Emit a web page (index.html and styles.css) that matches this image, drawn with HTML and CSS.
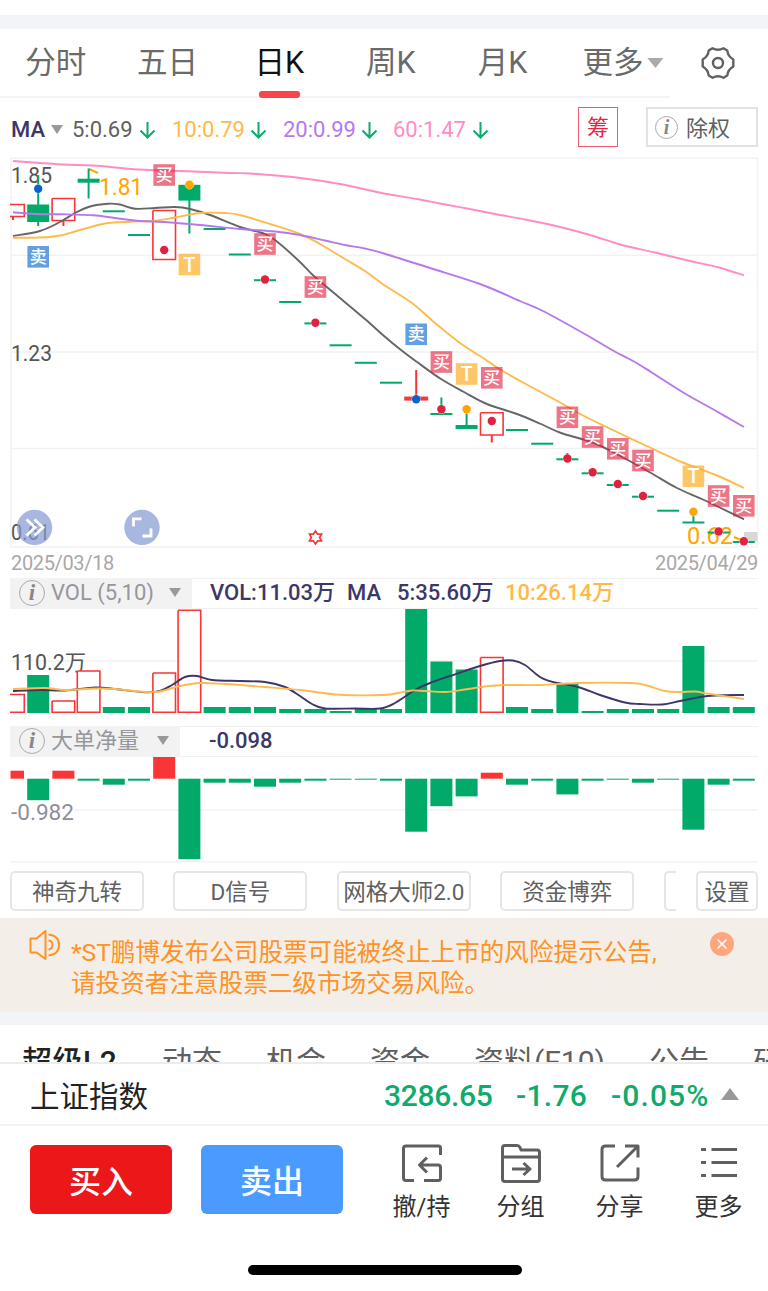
FILE: index.html
```
<!DOCTYPE html>
<html lang="zh-CN">
<head>
    <meta charset="UTF-8">
    <meta name="viewport" content="width=device-width, initial-scale=1.0">
    <title>日K</title>
    <link rel="stylesheet" href="styles.css">
</head>
<body>
    <div class="page">
        <div class="divider top-divider"></div>

        <nav class="period-tabs">
            <span class="tab">分时</span>
            <span class="tab">五日</span>
            <span class="tab active">日K</span>
            <span class="tab">周K</span>
            <span class="tab">月K</span>
            <span class="tab more">更多<i class="tri big"></i></span>
            <svg class="gear" width="36" height="36" viewBox="0 0 36 36">
                <path d="M12.500 3.300Q18 6.200 23.500 3.300L27.300 5.500Q27.800 11.300 33.300 14.500V21.500Q27.800 24.700 27.300 30.500L23.500 32.700Q18 29.800 12.500 32.700L8.700 30.500Q8.200 24.700 2.700 21.500V14.500Q8.200 11.300 8.700 5.500Z"/>
                <circle cx="18" cy="18" r="5"/>
            </svg>
        </nav>

        <div class="ma-row">
            <span class="ma-name">MA</span>
            <i class="tri"></i>
            <span class="ma ma5">5:0.69</span>
            <svg class="down" viewBox="0 0 16 18"><path d="M8 1V16M1 9.500L8 16.500L15 9.500"/></svg>
            <span class="ma ma10">10:0.79</span>
            <svg class="down" viewBox="0 0 16 18"><path d="M8 1V16M1 9.500L8 16.500L15 9.500"/></svg>
            <span class="ma ma20">20:0.99</span>
            <svg class="down" viewBox="0 0 16 18"><path d="M8 1V16M1 9.500L8 16.500L15 9.500"/></svg>
            <span class="ma ma60">60:1.47</span>
            <svg class="down" viewBox="0 0 16 18"><path d="M8 1V16M1 9.500L8 16.500L15 9.500"/></svg>
            <span class="chip">筹</span>
            <span class="adjust"><i class="info small">i</i>除权</span>
        </div>

        <svg class="chart" id="kline" width="768" height="391" viewBox="0 157 768 391"></svg>

        <div class="dates">
            <span>2025/03/18</span>
            <span>2025/04/29</span>
        </div>

        <div class="sub-head">
            <div class="picker vol-picker"><i class="info">i</i><span class="label">VOL (5,10)</span><i class="tri"></i></div>
            <span class="value vol-now">VOL:11.03万</span>
            <span class="value vol-ma">MA</span>
            <span class="value vol-ma5">5:35.60万</span>
            <span class="value vol-ma10">10:26.14万</span>
        </div>
        <svg class="chart" id="volume" width="768" height="117" viewBox="0 609 768 117"></svg>

        <div class="sub-head">
            <div class="picker net-picker"><i class="info">i</i><span class="label">大单净量</span><i class="tri"></i></div>
            <span class="value net-now">-0.098</span>
        </div>
        <svg class="chart" id="net" width="768" height="106" viewBox="0 757 768 106"></svg>

        <div class="tools">
            <div class="tool-list">
                <span class="tool">神奇九转</span>
                <span class="tool">D信号</span>
                <span class="tool">网格大师2.0</span>
                <span class="tool">资金博弈</span>
                <span class="tool"></span>
            </div>
            <span class="tool setting">设置</span>
        </div>

        <div class="notice">
            <svg class="horn" width="32" height="32" viewBox="0 0 32 32">
                <path d="M2.500 9.500H8.500L17.500 2V30L8.500 23.500H2.500Z"/>
                <path d="M20.500 11.500Q24.500 12 24.500 16Q24.500 20 20.500 20.500M20.500 5.500Q31 6.500 31 16Q31 25.500 20.500 26.500"/>
            </svg>
            <p class="notice-text">*ST鹏博发布公司股票可能被终止上市的风险提示公告,<br>请投资者注意股票二级市场交易风险。</p>
            <svg class="close" width="24" height="24" viewBox="0 0 24 24">
                <circle cx="12" cy="12" r="12"/>
                <path d="M7.500 7.500L16.500 16.500M16.500 7.500L7.500 16.500"/>
            </svg>
        </div>
        <div class="divider"></div>

        <nav class="info-tabs">
            <span class="current">超级L2</span>
            <span>动态</span>
            <span>机会</span>
            <span>资金</span>
            <span>资料(F10)</span>
            <span>公告</span>
            <span>研报</span>
        </nav>

        <div class="index-bar">
            <span class="index-name">上证指数</span>
            <span class="num price">3286.65</span>
            <span class="num change">-1.76</span>
            <span class="num percent">-0.05%</span>
            <i class="tri up"></i>
        </div>

        <div class="actions">
            <button class="trade buy">买入</button>
            <button class="trade sell">卖出</button>
            <div class="action">
                <svg width="44" height="42" viewBox="0 0 44 42">
                    <path d="M40.500 12V5Q40.500 3 38.500 3H6Q3.500 3 3.500 5.500V34.500Q3.500 37.500 6 37.500H14M24 37.500H38.500Q40.500 37.500 40.500 35V24.500Q40.500 22 38 22H20M27 14.500L19.500 22L27 29.500"/>
                </svg>
                <span>撤/持</span>
            </div>
            <div class="action">
                <svg width="44" height="42" viewBox="0 0 44 42">
                    <path d="M3.500 36V5Q3.500 2.500 6 2.500H18Q20 2.500 21 4.500L22 7H38Q40.500 7 40.500 9.500V36Q40.500 38.500 38 38.500H6Q3.500 38.500 3.500 36ZM3.500 14H40.500M13 26H31M24.500 20L31 26L24.500 32"/>
                </svg>
                <span>分组</span>
            </div>
            <div class="action">
                <svg width="44" height="42" viewBox="0 0 44 42">
                    <path d="M17 3H7.500Q4 3 4 6.500V33.500Q4 37 7.500 37H36.500Q40 37 40 33.500V24.500M27 3H40V14.500M40 3L19 24"/>
                </svg>
                <span>分享</span>
            </div>
            <div class="action">
                <svg width="44" height="42" viewBox="0 0 44 42">
                    <path d="M4 6.500H9M14.500 6.500H40M4 19.500H9M14.500 19.500H40M4 32.500H9M14.500 32.500H40"/>
                </svg>
                <span>更多</span>
            </div>
        </div>
        <div class="home-bar"></div>
    </div>
    <script src="chart.js"></script>
</body>
</html>
```
FILE: styles.css
```
* {
    box-sizing: border-box;
}
body {
    margin: 0;
    background-color: #fff;
    font-family: Roboto, "Noto Sans CJK SC", sans-serif;
    color: #606060;
}
.page {
    width: 768px;
    height: 1291px;
    overflow: hidden;
}
.divider {
    height: 13px;
    background-color: #f3f4f8;
}
.top-divider {
    height: 14px;
    margin-top: 15px;
}

/* period tabs */
.period-tabs {
    display: flex;
    height: 69px;
    background: linear-gradient(#f3f3f5, #f3f3f5) left bottom / 670px 2px no-repeat;
}
.tab {
    display: flex;
    flex-direction: column;
    align-items: center;
    justify-content: space-between;
    width: 111.700px;
    padding-top: 12px;
    font-size: 30.500px;
    line-height: 44px;
    color: #6a6a6a;
}
.tab.active {
    color: #111;
}
.tab.active::after {
    content: "";
    width: 41px;
    height: 7px;
    border-radius: 3px;
    background-color: #fb4448;
}
.tab.more {
    flex-direction: row;
    align-items: flex-start;
    justify-content: flex-start;
    padding-left: 24px;
}
.gear {
    margin: 16px 0 0 30px;
    fill: none;
    stroke: #606060;
    stroke-width: 2.4;
    stroke-linejoin: round;
}
.tri {
    flex: none;
    width: 12px;
    height: 9px;
    background-color: #999;
    clip-path: polygon(0 0, 100% 0, 50% 100%);
}
.tri.big {
    width: 16px;
    height: 10px;
    margin: 17px 0 0 4px;
    background-color: #aaa;
}
.tri.up {
    width: 18px;
    height: 12px;
    clip-path: polygon(50% 0, 100% 100%, 0 100%);
}

/* moving averages */
.ma-row {
    display: flex;
    align-items: center;
    height: 59px;
    padding: 4px 10px 0 11px;
    font-size: 22px;
    line-height: 30px;
}
.ma-name {
    width: 40px;
    font-weight: 500;
    color: #3c3768;
}
.ma {
    width: 77px;
    margin-left: 17px;
    white-space: nowrap;
}
.ma5 {
    width: 67px;
    margin-left: 9px;
}
.ma10 {
    margin-left: 16px;
    width: 78px;
    color: #ffb849;
}
.ma20 {
    margin-left: 16px;
    width: 78px;
    color: #b679ec;
}
.ma60 {
    margin-left: 15px;
    width: 79px;
    color: #ff8cc3;
}
.down {
    width: 17px;
    height: 18px;
    margin-top: 1px;
    fill: none;
    stroke: #0dab6c;
    stroke-width: 2;
}
.chip {
    width: 40px;
    height: 40px;
    margin: -5px 0 0 89px;
    border: 1.500px solid #ee5b70;
    color: #e22743;
    line-height: 40px;
    text-align: center;
}
.adjust {
    display: flex;
    align-items: center;
    width: 112px;
    height: 40px;
    margin: -5px 0 0 auto;
    padding: 3px 0 0 7px;
    border: 2px solid #e2e2e2;
}
.info {
    width: 26px;
    height: 26px;
    border: 1.500px solid #aaa;
    border-radius: 50%;
    color: #888;
    font: italic bold 23px/23px "Liberation Serif", serif;
    text-align: center;
}
.info.small {
    width: 23px;
    height: 23px;
    margin: -3px 8px 0 0;
    font-size: 20px;
    line-height: 20px;
}

/* charts */
.chart {
    display: block;
}
.dates {
    display: flex;
    justify-content: space-between;
    height: 30px;
    padding: 0 10px 0 11px;
    font-size: 20px;
    letter-spacing: -0.35px;
    line-height: 31px;
    color: #a8a8a8;
}
.sub-head {
    display: flex;
    align-items: center;
    height: 31px;
    margin: 0 10px;
    border-top: 1px solid #f0f0f0;
    border-bottom: 1px solid #f0f0f0;
    font-size: 22px;
    font-weight: 500;
    line-height: 29px;
    color: #3c3768;
    white-space: nowrap;
}
.value {
    padding-bottom: 2px;
}
.picker {
    display: flex;
    align-items: center;
    height: 31px;
    padding: 0 11px 2px 9px;
    background-color: #f2f2f2;
    font-weight: 400;
    color: #96969c;
}
.picker .label {
    flex: 1;
    padding-left: 6px;
}
.vol-picker {
    width: 182px;
}
.net-picker {
    width: 170px;
}
.vol-now {
    width: 137px;
    margin-left: 18px;
}
.vol-ma {
    width: 50px;
}
.vol-ma5 {
    width: 108px;
}
.vol-ma10 {
    color: #ffb849;
}
.net-now {
    margin-left: 29px;
}

/* indicator buttons */
.tools {
    display: flex;
    justify-content: space-between;
    height: 55px;
    padding: 8px 10px 0;
}
.tool-list {
    display: flex;
    gap: 29.400px;
    width: 666px;
    overflow: hidden;
}
.tool {
    flex: none;
    width: 134px;
    height: 40px;
    border: 2px solid #e6e6e6;
    border-radius: 5px;
    font-size: 22.500px;
    line-height: 39px;
    text-align: center;
    white-space: nowrap;
}
.tool.setting {
    width: 62px;
}

/* notice */
.notice {
    display: flex;
    align-items: flex-start;
    height: 94px;
    background-color: #f4eee8;
}
.horn {
    margin: 11px 0 0 28px;
    fill: none;
    stroke: #ff9226;
    stroke-width: 2;
    stroke-linejoin: round;
}
.notice-text {
    width: 638px;
    margin: 19px 0 0 11px;
    font-size: 24.600px;
    line-height: 31px;
    color: #ff9226;
    white-space: nowrap;
}
.close {
    margin: 14px 0 0 1px;
    fill: #ffa67e;
}
.close path {
    stroke: #fff;
    stroke-width: 1.500;
}

/* info tabs, cut by the bar below */
.info-tabs {
    display: flex;
    gap: 44px;
    height: 37px;
    padding: 15px 0 0 22px;
    overflow: hidden;
    font-size: 30px;
    line-height: 44px;
    white-space: nowrap;
}
.info-tabs span {
    flex: none;
}
.info-tabs .current {
    width: 96px;
    font-weight: 500;
    letter-spacing: 0.5px;
    color: #222;
}

/* bottom bar */
.index-bar {
    display: flex;
    align-items: center;
    height: 64px;
    padding-left: 30px;
    border-top: 2px solid #ececec;
    border-bottom: 2px solid #f2f2f2;
    font-size: 30px;
    color: #222;
}
.index-name {
    width: 354px;
    font-size: 29.500px;
}
.num {
    padding-top: 2px;
    font-weight: 500;
    color: #0dab6c;
}
.price {
    width: 132px;
    letter-spacing: -0.3px;
}
.change {
    width: 95px;
    letter-spacing: 0.3px;
}
.percent {
    width: 110px;
    letter-spacing: 1.100px;
}
.actions {
    display: flex;
    height: 100px;
    padding: 19px 0 0 30px;
}
.trade {
    width: 142px;
    height: 69px;
    margin: 0 29px 0 0;
    padding: 0 0 1px;
    border: 0;
    border-radius: 6px;
    font-family: inherit;
    font-size: 32px;
    font-weight: 500;
    color: #fff;
}
.buy {
    background-color: #eb1719;
}
.sell {
    background-color: #4a9aff;
}
.action {
    display: flex;
    flex-direction: column;
    align-items: center;
    gap: 4px;
    width: 99px;
    margin-top: -2px;
    font-size: 24px;
    line-height: 36px;
    color: #333;
}
.action svg {
    fill: none;
    stroke: #606060;
    stroke-width: 3;
    stroke-linejoin: round;
}
.home-bar {
    width: 274px;
    height: 10px;
    margin: 39px 0 0 248px;
    border-radius: 5px;
    background-color: #000;
}
```
FILE: chart.js
```
const RED = '#fa3535';
const GREEN = '#02aa6a';
const GRID = '#f2f2f2';
const STEP = 25.2;
const BAR = 22;
const centerX = i => 13 + i * STEP;

function add(svg, tag, attrs, text) {
    const el = document.createElementNS('http://www.w3.org/2000/svg', tag);
    for (const key in attrs) el.setAttribute(key, attrs[key]);
    if (text) el.textContent = text;
    svg.appendChild(el);
    return el;
}

function rect(svg, x, y, width, height, fill, opacity = 1) {
    add(svg, 'rect', { x, y, width, height, fill, opacity });
}

function segment(svg, x1, y1, x2, y2, stroke, width = 2) {
    add(svg, 'line', { x1, y1, x2, y2, stroke, 'stroke-width': width });
}

function label(svg, x, y, text, width, size, fill) {
    add(svg, 'text', { x, y, textLength: width, lengthAdjust: 'spacingAndGlyphs', 'font-size': size, fill }, text);
}

// hollow red bar, the first one is cut by the chart edge
function hollow(svg, i, top, bottom) {
    const right = centerX(i) + 11.3;
    const left = i === 0 ? 10 : centerX(i) - 11.3;
    const start = i === 0 ? '' : 'V' + top;
    add(svg, 'path', {
        d: `M${left} ${top}H${right}V${bottom}H${left}${start}`,
        fill: i === 0 ? 'none' : '#fff', stroke: RED, 'stroke-width': 1.6
    });
}

function curve(svg, points, stroke) {
    let d = `M${points[0]}`;
    for (let i = 0; i < points.length - 1; i++) {
        const p0 = points[i - 1] || points[i];
        const p1 = points[i];
        const p2 = points[i + 1];
        const p3 = points[i + 2] || p2;
        d += `C${p1[0] + (p2[0] - p0[0]) / 6} ${p1[1] + (p2[1] - p0[1]) / 6}`;
        d += ` ${p2[0] - (p3[0] - p1[0]) / 6} ${p2[1] - (p3[1] - p1[1]) / 6} ${p2[0]} ${p2[1]}`;
    }
    add(svg, 'path', { d, fill: 'none', stroke, 'stroke-width': 1.9 });
}

/* ---- K line ---- */
const kline = document.getElementById('kline');
add(kline, 'rect', { x: 11, y: 158, width: 746.5, height: 389, fill: 'none', stroke: GRID, 'stroke-width': 1.5 });
[255.3, 352, 448.5].forEach(y => segment(kline, 11, y, 757, y, GRID, 1.5));
rect(kline, 744, 532, 13.5, 9.5, '#d8d8d8');

label(kline, 11, 182.5, '1.85', 41, 21.5, '#555');
label(kline, 11, 361, '1.23', 41, 21.5, '#555');
label(kline, 11, 539.5, '0.61', 39, 21.5, '#555');
label(kline, 99, 195, '1.81', 44, 24, '#ffa500');
label(kline, 687, 543.5, '0.62', 46, 24, '#ffa500');
segment(kline, 89, 169, 98, 173, '#ffa500');
segment(kline, 734, 537, 743, 541, '#ffa500');

// [index, type, top, bottom, wick top, wick bottom]
const candles = [
    [0, 'up', 204.5, 216.5], [1, 'down', 204.5, 222, 175, 226], [2, 'up', 198.5, 220.5],
    [3, 'down', 178.7, 182.700, 168.500, 198.500], [4, 'flat', 211.3], [5, 'flat', 235],
    [6, 'up', 210.500, 259.500], [7, 'down', 184.800, 200.600, 184, 233.500], [8, 'flat', 229],
    [9, 'flat', 254.500], [10, 'flat', 280.2], [11, 'flat', 302], [12, 'flat', 323.400],
    [13, 'flat', 345.300], [14, 'flat', 362.800], [15, 'flat', 382.700],
    [17, 'flat', 414, 0, 397.500, 414], [18, 'down', 425, 429, 413, 427], [19, 'up', 412.800, 435],
    [20, 'flat', 430], [21, 'flat', 443.700], [22, 'flat', 459.300, 0, 453, 459], [23, 'flat', 473.300],
    [24, 'flat', 485], [25, 'flat', 496.700], [26, 'flat', 510.700], [27, 'flat', 522.500, 0, 513, 522.500],
    [28, 'flat', 532.500], [29, 'flat', 542]
];
candles.forEach(([i, type, top, bottom, high, low]) => {
    const x = centerX(i);
    if (type === 'up') hollow(kline, i, top, bottom);
    if (type === 'down') rect(kline, x - BAR / 2, top, BAR, bottom - top, GREEN);
    if (type === 'flat') rect(kline, x - BAR / 2, top - 1, BAR, 2, GREEN);
    if (high) segment(kline, x, high, x, low, GREEN);
});
segment(kline, 13, 216.500, 13, 220, RED);
segment(kline, centerX(2), 221, centerX(2), 226, RED);
segment(kline, centerX(19), 435, centerX(19), 442.500, RED);
segment(kline, centerX(16), 370, centerX(16), 398, RED);
rect(kline, centerX(16) - 12, 396.600, 24, 4, RED);

curve(kline, [[13,161],[63,164.5],[93,165.5],[139,169.5],[189,171.3],[230,173],[250,173.5],[300,178],[340,184],[370,190.5],[384,193.5],[417,199],[440,203.5],[467,208.5],[495,214],[525,219.5],[560,227],[590,235],[622,245],[655,252.5],[690,261],[717,267],[744,275.3]], '#ff8cc3');
curve(kline, [[13,236],[40,231],[60,222],[75,213],[90,206.5],[108,203.7],[120,204.5],[135,208.7],[155,208],[175,207],[190,209],[210,215],[240,227],[265,234],[280,244],[300,262],[315,277],[340,298],[365,319],[384,336],[401,350],[417,362],[441,379],[464,392],[487,404],[517,414],[541,424],[561,433],[594,443],[624,458],[651,473],[677,488],[704,500],[744,519.3]], '#666');
curve(kline, [[13,237.7],[40,237.5],[60,235.5],[80,230],[105,223.5],[130,221.7],[155,220.8],[175,217.5],[200,213],[225,213],[240,215],[270,224],[300,234],[320,244],[345,259],[365,271],[384,285],[412,303],[435,323],[460,343],[486,360],[501,370],[524,383],[561,403],[584,416],[617,432],[651,448],[684,463],[717,475.5],[744,488]], '#ffba4d');
curve(kline, [[13,212.3],[40,214.2],[63,214.3],[93,215.3],[115,218],[140,221],[164,222],[200,225],[240,229],[275,231.5],[300,235],[325,240.5],[345,245],[365,248.5],[384,253.5],[430,268],[480,284],[520,301],[545,312],[590,337],[612,350],[633,361],[651,372],[684,393],[717,411.5],[744,427]], '#b679ec');

const DOT = { buy: '#e2203f', sell: '#0a62d0', t: '#ffa500' };
[
    [1, 'sell', 188.7], [6, 'buy', 250], [7, 't', 184.8], [10, 'buy', 279.500], [12, 'buy', 322.700],
    [16, 'sell', 399.300], [17, 'buy', 409.300], [18, 't', 409.300], [19, 'buy', 421], [22, 'buy', 458.500],
    [23, 'buy', 472.300], [24, 'buy', 484], [25, 'buy', 496], [27, 't', 511.700], [28, 'buy', 531.500], [29, 'buy', 541.300]
].forEach(([i, kind, y]) => add(kline, 'circle', { cx: centerX(i), cy: y, r: 4.2, fill: DOT[kind], stroke: '#fff', 'stroke-width': 0.8, 'paint-order': 'stroke' }));

const MARK = {
    buy: ['买', '#e2203f', 0.62],
    sell: ['卖', '#2f80d8', 0.75],
    t: ['T', '#ffb02e', 0.72]
};
[
    [1, 'sell', 256.800], [6, 'buy', 175], [7, 't', 264.500], [10, 'buy', 244], [12, 'buy', 287],
    [16, 'sell', 334.300], [17, 'buy', 362], [18, 't', 374], [19, 'buy', 377.800], [22, 'buy', 417.300],
    [23, 'buy', 437], [24, 'buy', 448.800], [25, 'buy', 460.500], [27, 't', 476.300], [28, 'buy', 496], [29, 'buy', 505.800]
].forEach(([i, kind, y]) => {
    const [text, fill, opacity] = MARK[kind];
    const x = centerX(i);
    rect(kline, x - 10.8, y - 10.8, 21.6, 21.6, fill, opacity);
    add(kline, 'text', {
        x, y: y + (kind === 't' ? 7 : 6), fill: '#fff', 'text-anchor': 'middle',
        'font-size': kind === 't' ? 19.500 : 17, 'font-weight': 500
    }, text);
});

// round buttons over the chart
[34.5, 142].forEach(cx => add(kline, 'circle', { cx, cy: 527.400, r: 17.700, fill: '#8199d2', opacity: 0.7 }));
add(kline, 'path', { d: 'M26.500 519.500L35 527.500L26.500 535.500M34.500 519.500L43 527.500L34.500 535.500', fill: 'none', stroke: '#fff', 'stroke-width': 2.8 });
add(kline, 'path', { d: 'M133.500 526.500V518.800H141.500M151 528.500V536H142.500', fill: 'none', stroke: '#fff', 'stroke-width': 2.800 });
add(kline, 'path', { d: 'M315.500 531L317.700 534.200H321.500L319.600 537.500L321.500 540.800H317.700L315.500 544L313.300 540.800H309.500L311.400 537.500L309.500 534.200H313.300Z', fill: 'none', stroke: RED, 'stroke-width': 1.700 });

/* ---- volume ---- */
const volume = document.getElementById('volume');
segment(volume, 10, 661, 758, 661, GRID, 1.5);
label(volume, 11, 670, '110.2万', 75, 21.500, '#555');
const volTops = [694.5, 675, 701, 671, 707, 707, 673, 610.3, 707, 707, 707, 709, 709, 711, 709, 709, 608.5, 661.5, 669.5, 657.5, 707, 709, 684, 711, 709, 709, 709, 646, 707, 707];
const volUp = [0, 2, 3, 6, 7, 19];
volTops.forEach((top, i) => {
    if (volUp.includes(i)) hollow(volume, i, top, 712.3);
    else rect(volume, centerX(i) - BAR / 2, top, BAR, 713 - top, GREEN);
});
curve(volume, [[13,691],[40,690],[65,690.5],[95,687.5],[115,689],[145,692.3],[160,691],[172,685],[185,677],[197,676],[212,680],[240,681],[265,682],[285,687],[300,696],[312,704],[325,708.5],[355,708.5],[380,708.5],[395,703],[415,690],[430,683],[450,676],[480,666],[500,661],[513,660.5],[525,665],[540,677],[553,682],[578,687],[600,695],[625,702.5],[640,704],[662,704.5],[680,701],[700,697],[715,695.5],[744,695]], '#3c3768');
curve(volume, [[13,689],[45,688],[65,690],[95,688.5],[115,689],[145,692],[160,691.5],[180,686],[200,683],[225,684],[265,687],[300,690],[340,694.8],[384,695],[398,693],[412,690.5],[425,691],[445,692],[465,689.5],[485,686.5],[505,685],[540,685],[578,683],[630,683],[645,685],[665,691],[680,692],[695,691.5],[710,694],[744,699]], '#ffba4d');

/* ---- net volume of large orders ---- */
const net = document.getElementById('net');
const ZERO = 778.7;
segment(net, 74, 810, 758, 810, GRID, 1.5);
segment(net, 10, 861.800, 758, 861.800, GRID, 1.5);
label(net, 11, 819.500, '-0.982', 63, 21.500, '#8e8e98');
const netValues = [8, -21.5, 8, -2, -6, -2, 21.7, -80.5, -4, -4, -8, -4, -2, -1, -1, -2, -53, -27.5, -17.7, 6, -6, -2, -15.7, -2, -1, -4, -1, -51, -6, -2];
netValues.forEach((v, i) => {
    const left = Math.max(10.5, centerX(i) - BAR / 2);
    rect(net, left, v > 0 ? ZERO - v : ZERO, centerX(i) + BAR / 2 - left, Math.abs(v), v > 0 ? RED : GREEN);
});
```
